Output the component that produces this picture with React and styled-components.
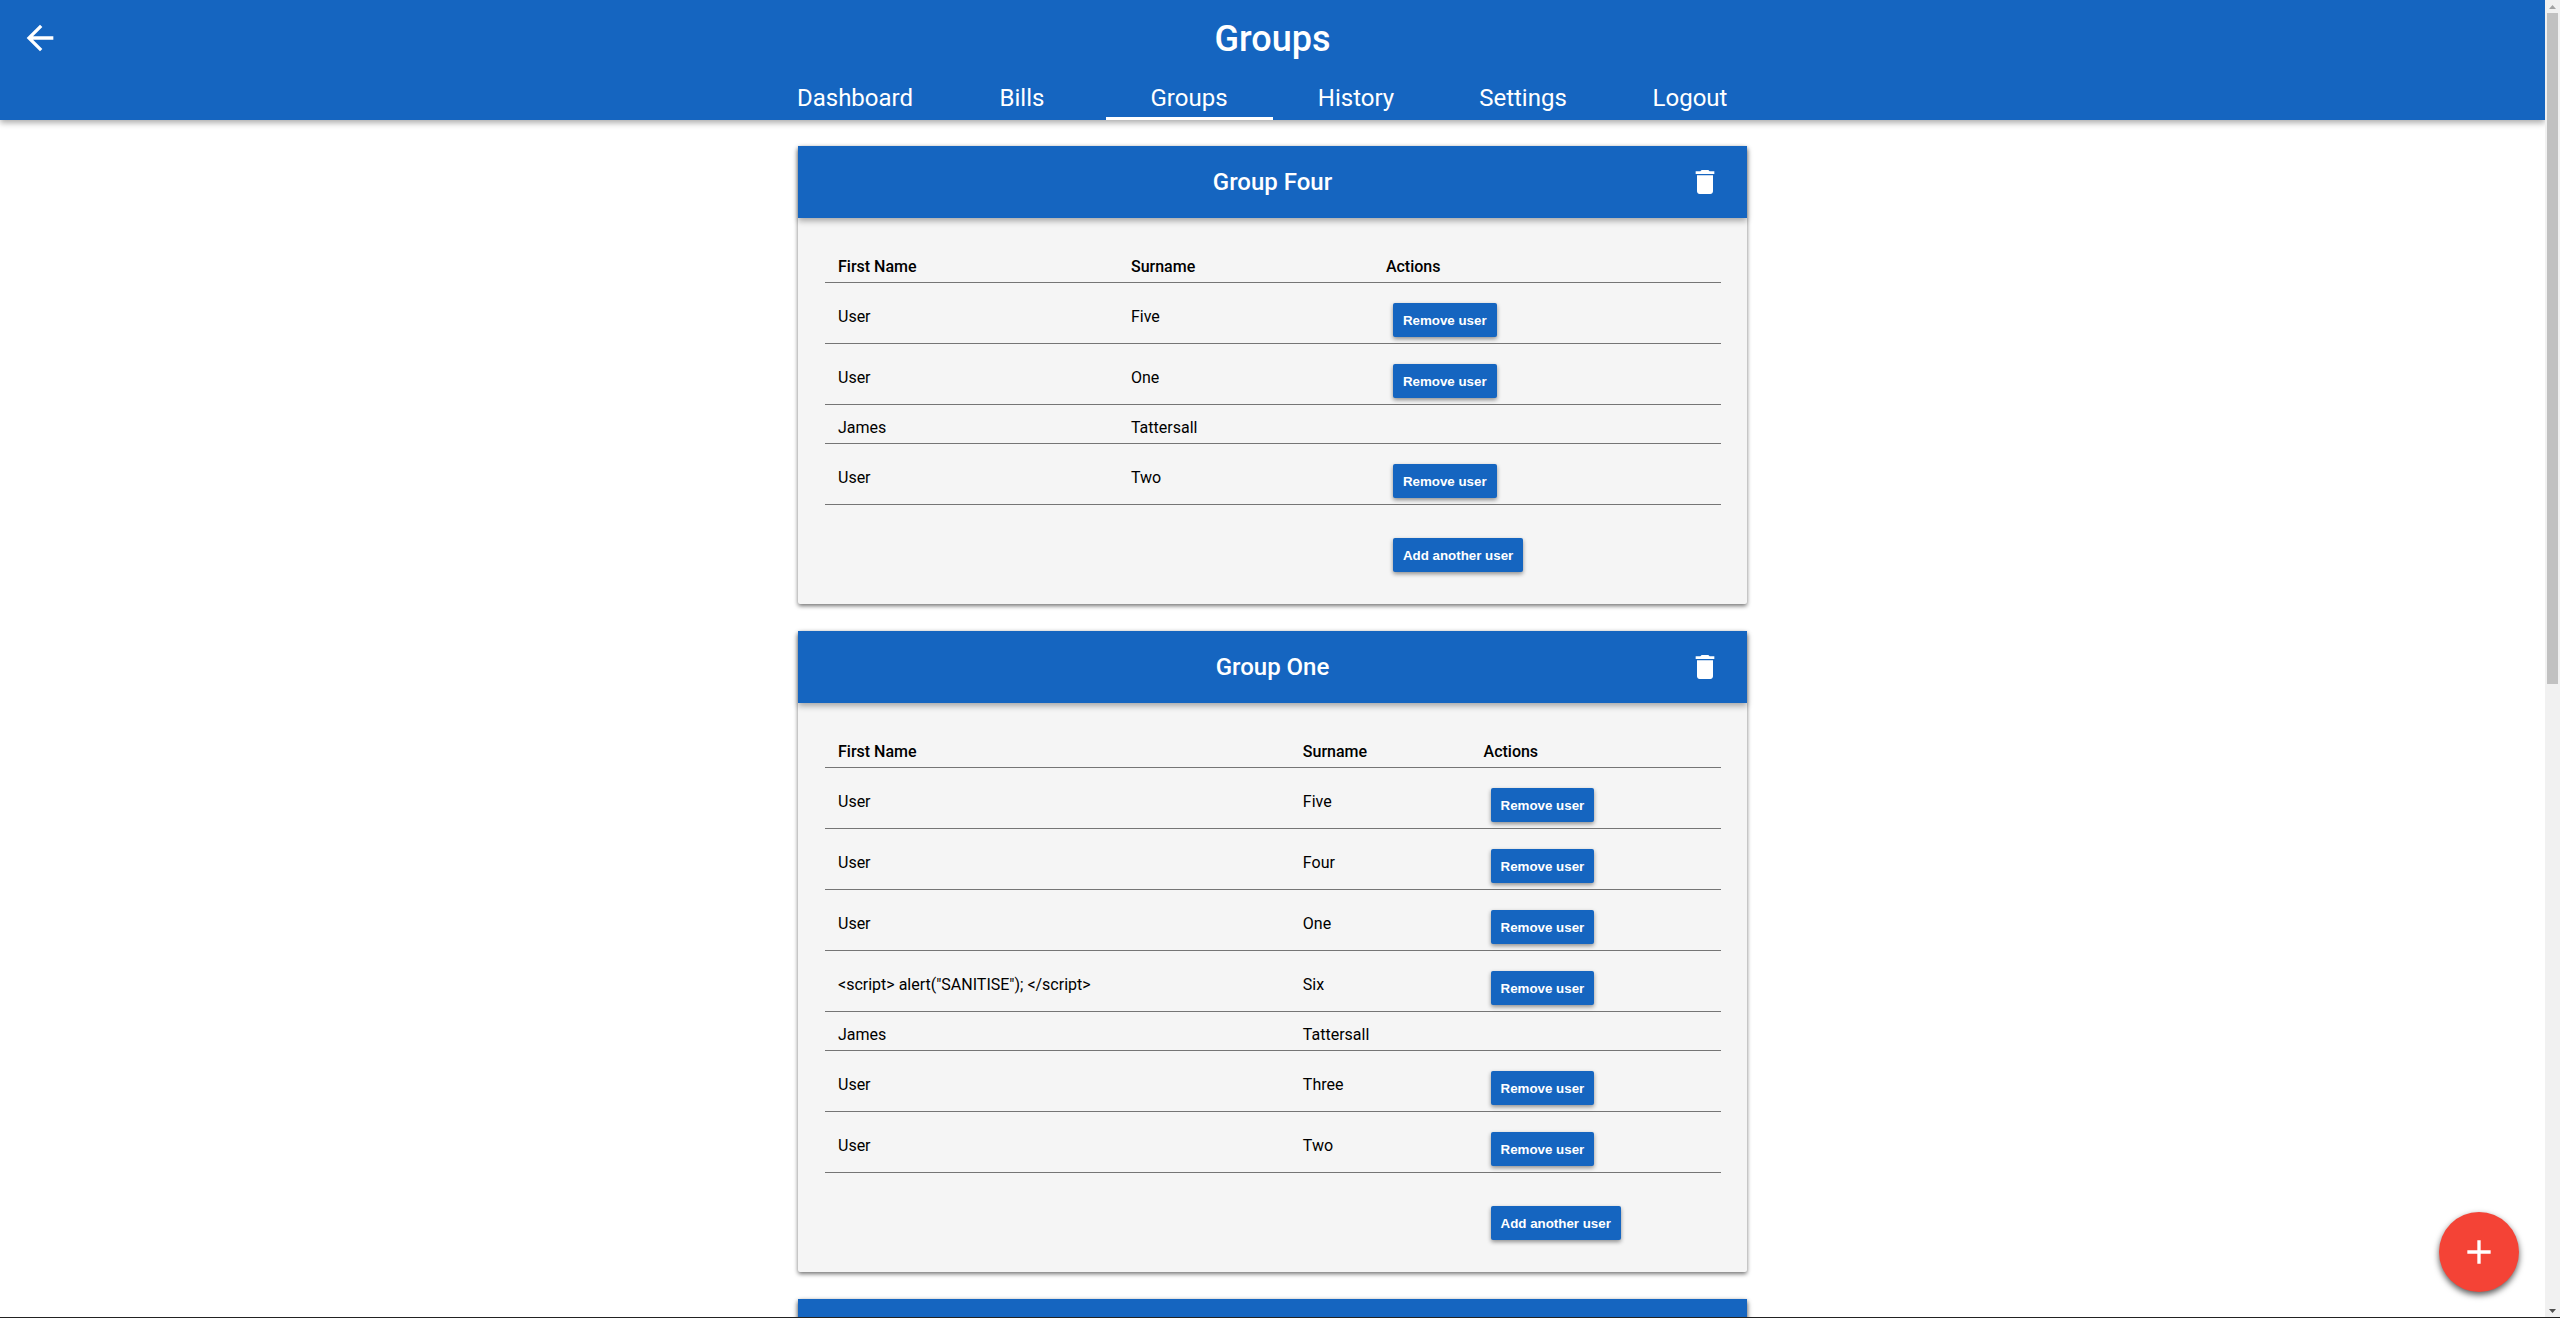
import React from "react";
import styled, { createGlobalStyle } from "styled-components";
import { MdAdd, MdArrowBack, MdDelete } from "react-icons/md";

const GlobalStyle = createGlobalStyle`
  * { box-sizing: border-box; }
  body {
    margin: 0;
    background: #fff;
    color: #000;
    font-family: Roboto, "Liberation Sans", sans-serif;
    font-size: 16px;
    line-height: 19px;
  }
`;

const Screen = styled.div`
  position: relative;
  display: grid;
  grid-template-columns: minmax(0, 1fr) 15px;
  height: 100vh;
  overflow: hidden;
  border-bottom: 1px solid #222;
`;

const Page = styled.div`
  min-width: 0;
  overflow: hidden;
`;

const TopBar = styled.header`
  background: #1565c0;
  color: #fff;
  box-shadow: 0 3px 6px rgba(0, 0, 0, 0.32);
`;

const TitleRow = styled.div`
  display: grid;
  grid-template-columns: 40px 1fr 40px;
  align-items: center;
  height: 76px;
  padding: 0 20px;
`;

const PageTitle = styled.h1`
  margin: 0;
  padding-top: 2px;
  font-size: 36px;
  line-height: 42px;
  font-weight: 500;
  text-align: center;
`;

const IconButton = styled.button`
  display: flex;
  align-items: center;
  justify-content: center;
  padding: 0;
  border: 0;
  background: none;
  color: #fff;
  cursor: pointer;
`;

const Tabs = styled.nav`
  display: grid;
  grid-template-columns: repeat(6, 1fr);
  max-width: 1002px;
  margin: 0 auto;
`;

const Tab = styled.a`
  height: 44px;
  padding-top: 8px;
  border-bottom: 3px solid ${(p) => (p.$active ? "#fff" : "transparent")};
  color: #fff;
  font-size: 24px;
  line-height: 28px;
  text-align: center;
  text-decoration: none;
`;

const Groups = styled.main`
  display: flex;
  flex-direction: column;
  gap: 27px;
  max-width: 949px;
  margin: 26px auto 0;
`;

const Card = styled.section`
  border-radius: 2px;
  background: #f5f5f5;
  box-shadow: 0 2px 4px rgba(0, 0, 0, 0.55);
`;

const CardHeader = styled.header`
  display: grid;
  grid-template-columns: 32px 1fr 32px;
  align-items: center;
  height: 72px;
  padding: 0 26px;
  background: #1565c0;
  color: #fff;
  box-shadow: 0 3px 6px rgba(0, 0, 0, 0.32);
`;

const CardTitle = styled.h2`
  grid-column: 2;
  margin: 0;
  font-size: 24px;
  line-height: 28px;
  font-weight: 500;
  text-align: center;
`;

const CardBody = styled.div`
  padding: 26px 26px 26px 27px;
`;

const Members = styled.table`
  width: 100%;
  border-collapse: separate;
  border-spacing: 0;

  th,
  td {
    padding: 13px 54px 6px 0;
    border-bottom: 1px solid #757575;
    text-align: left;
    vertical-align: middle;
  }
  th { font-weight: 500; }
  th:first-child,
  td:first-child {
    padding-left: 13px;
    padding-right: 53px;
  }
  th:last-child,
  td:last-child { padding-right: 14px; }
  tfoot td {
    padding-top: 26px;
    border-bottom: 0;
  }
`;

const ActionButton = styled.button`
  display: block;
  height: 34px;
  margin: 7px 7px 0;
  padding: 0 10px;
  border: 0;
  border-radius: 2px;
  background: #1565c0;
  color: #fff;
  font-family: "Liberation Sans", Arial, sans-serif;
  font-weight: 700;
  white-space: nowrap;
  box-shadow: 0 2px 4px rgba(0, 0, 0, 0.42);
  cursor: pointer;
`;

const AddGroup = styled(IconButton)`
  position: absolute;
  right: 41px;
  bottom: 25px;
  width: 80px;
  height: 80px;
  border-radius: 50%;
  background: #f44336;
  box-shadow: 0 3px 6px rgba(0, 0, 0, 0.65);
`;

const ScrollTrack = styled.div`
  display: grid;
  grid-template-rows: 13px minmax(0, 1fr) 13px;
  justify-items: center;
  align-items: center;
  background: #f1f1f1;
`;

const ScrollLane = styled.div`
  width: 11px;
  height: 100%;
`;

const ScrollThumb = styled.div`
  height: 52%;
  background: #c1c1c1;
`;

const tabs = ["Dashboard", "Bills", "Groups", "History", "Settings", "Logout"];

const groups = [
  {
    name: "Group Four",
    members: [
      ["User", "Five"],
      ["User", "One"],
      ["James", "Tattersall", true],
      ["User", "Two"],
    ],
  },
  {
    name: "Group One",
    members: [
      ["User", "Five"],
      ["User", "Four"],
      ["User", "One"],
      ['<script> alert("SANITISE"); </script>', "Six"],
      ["James", "Tattersall", true],
      ["User", "Three"],
      ["User", "Two"],
    ],
  },
];

function GroupCard({ name, members }) {
  return (
    <Card>
      <CardHeader>
        <CardTitle>{name}</CardTitle>
        <IconButton type="button" aria-label={`Delete ${name}`}>
          <MdDelete size={32} />
        </IconButton>
      </CardHeader>
      <CardBody>
        <Members>
          <thead>
            <tr>
              <th scope="col">First Name</th>
              <th scope="col">Surname</th>
              <th scope="col">Actions</th>
            </tr>
          </thead>
          <tbody>
            {members.map(([first, last, owner]) => (
              <tr key={first + last}>
                <td>{first}</td>
                <td>{last}</td>
                <td>
                  {!owner && <ActionButton type="button">Remove user</ActionButton>}
                </td>
              </tr>
            ))}
          </tbody>
          <tfoot>
            <tr>
              <td />
              <td />
              <td>
                <ActionButton type="button">Add another user</ActionButton>
              </td>
            </tr>
          </tfoot>
        </Members>
      </CardBody>
    </Card>
  );
}

function Scrollbar() {
  return (
    <ScrollTrack aria-hidden="true">
      <svg width="7" height="4" viewBox="0 0 7 4">
        <path d="M3.5 0 7 4H0z" fill="#a3a3a3" />
      </svg>
      <ScrollLane>
        <ScrollThumb />
      </ScrollLane>
      <svg width="7" height="4" viewBox="0 0 7 4">
        <path d="M0 0h7L3.5 4z" fill="#505050" />
      </svg>
    </ScrollTrack>
  );
}

export default function App() {
  return (
    <>
      <GlobalStyle />
      <Screen>
        <Page>
          <TopBar>
            <TitleRow>
              <IconButton type="button" aria-label="Back">
                <MdArrowBack size={40} />
              </IconButton>
              <PageTitle>Groups</PageTitle>
            </TitleRow>
            <Tabs>
              {tabs.map((tab) => (
                <Tab key={tab} href="#" $active={tab === "Groups"}>
                  {tab}
                </Tab>
              ))}
            </Tabs>
          </TopBar>
          <Groups>
            {groups.map((group) => (
              <GroupCard key={group.name} {...group} />
            ))}
            <Card>
              <CardHeader />
            </Card>
          </Groups>
        </Page>
        <Scrollbar />
        <AddGroup type="button" aria-label="Add group">
          <MdAdd size={40} />
        </AddGroup>
      </Screen>
    </>
  );
}
